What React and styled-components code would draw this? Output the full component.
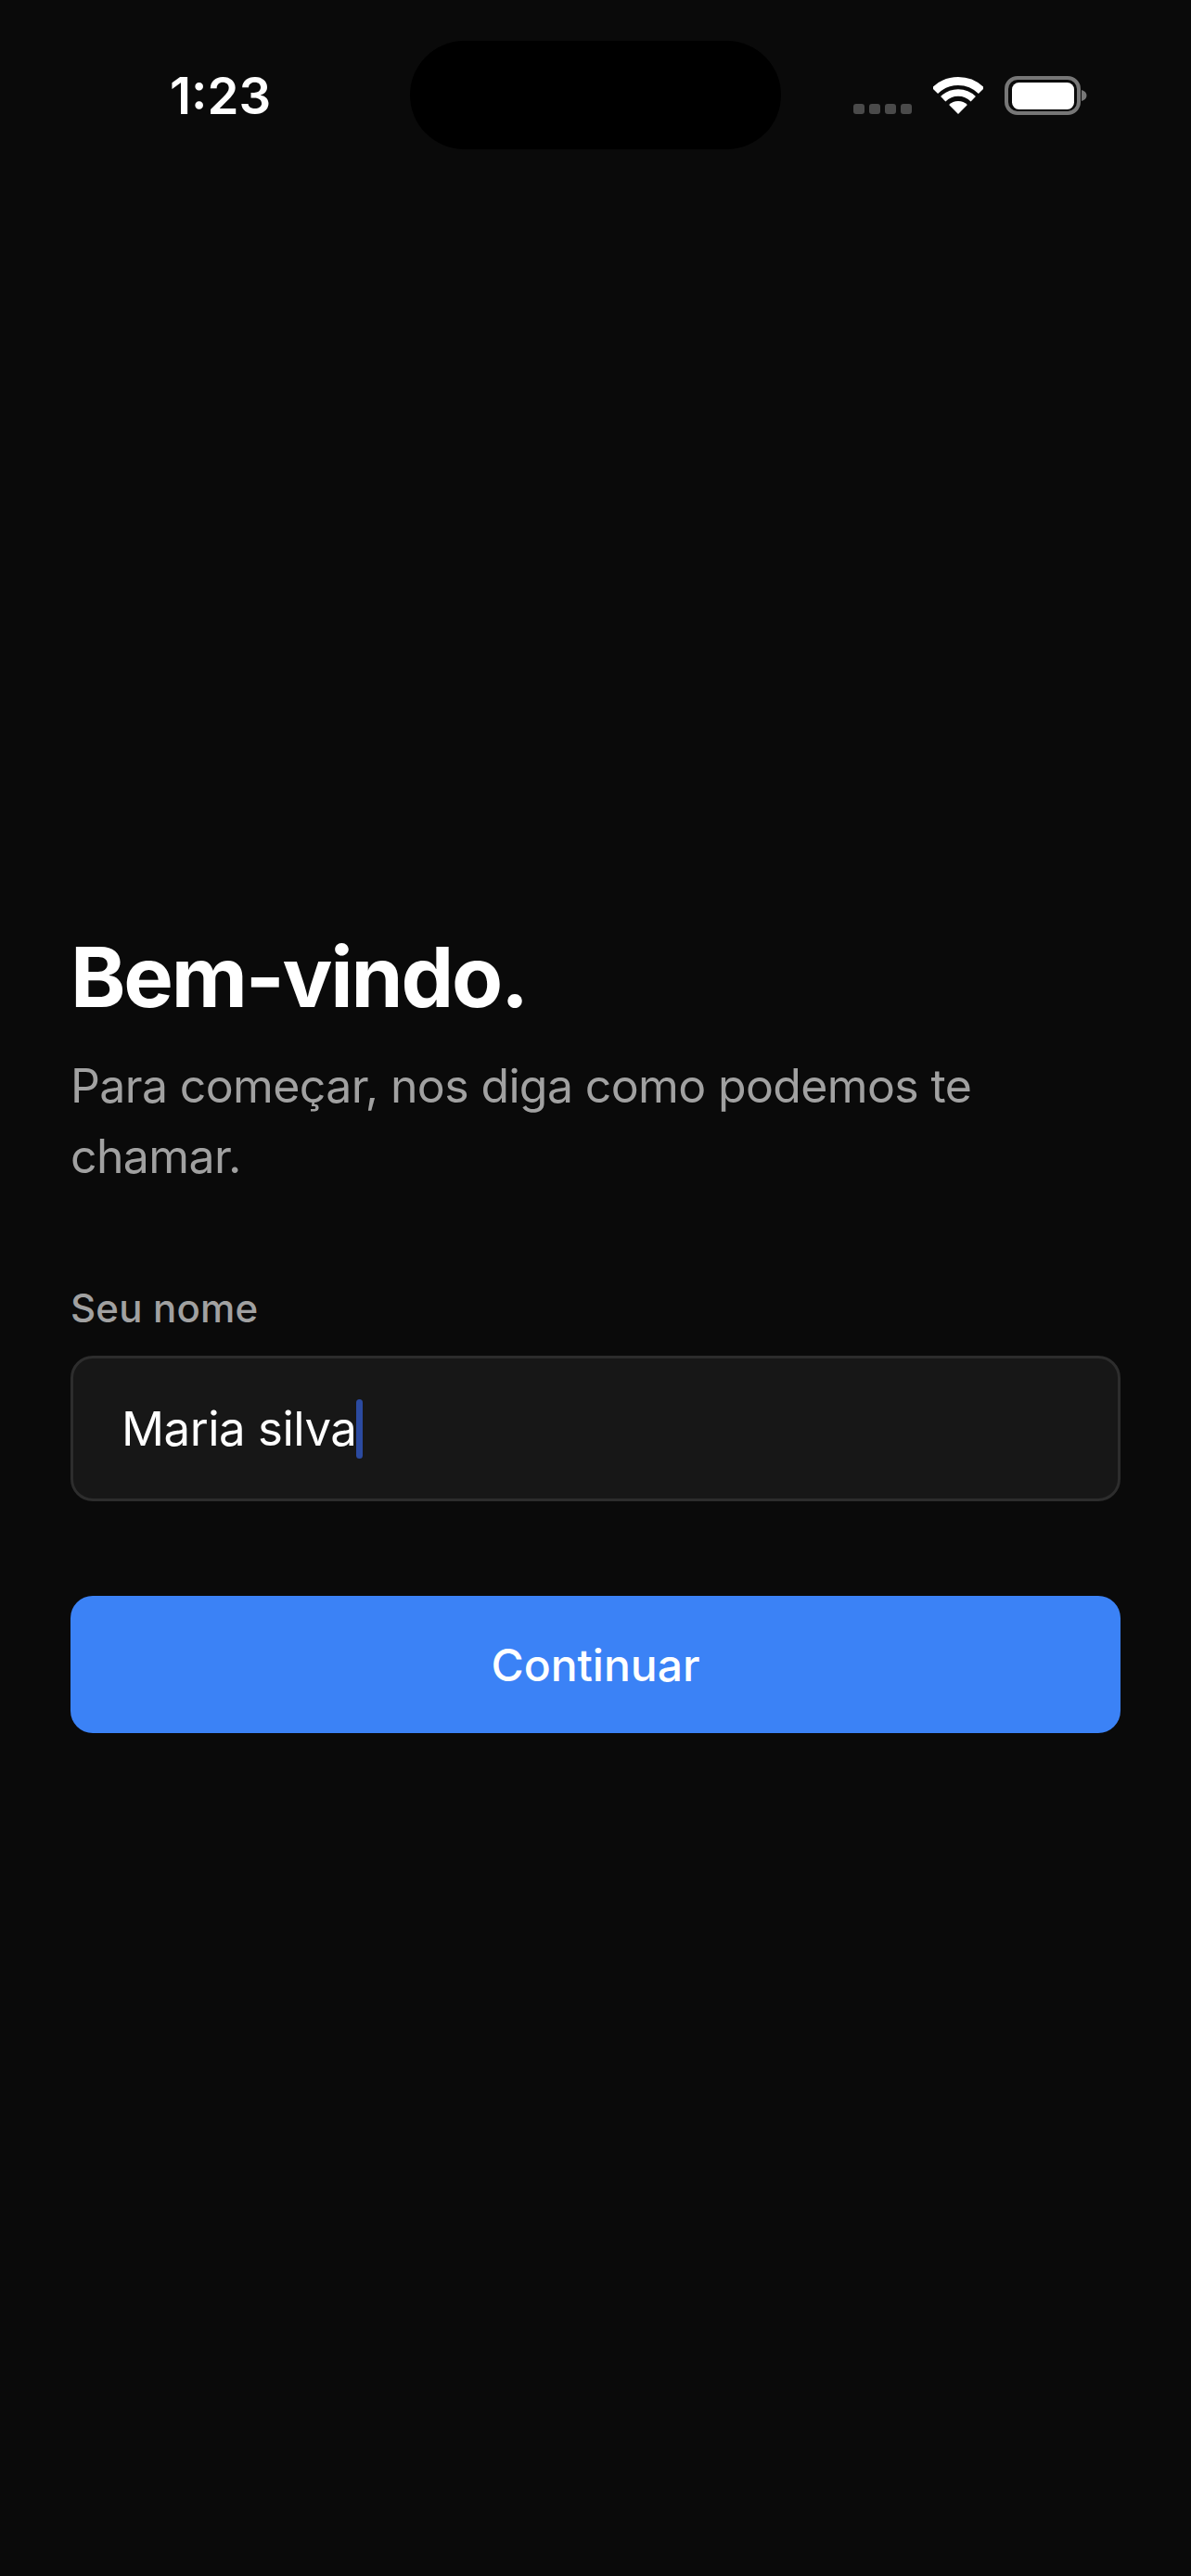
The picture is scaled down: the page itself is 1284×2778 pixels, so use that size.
import React from 'react';
import styled, { createGlobalStyle } from 'styled-components';

const GlobalStyle = createGlobalStyle`
  html, body {
    margin: 0;
    padding: 0;
    background: #0a0a0a;
  }
  * {
    box-sizing: border-box;
  }
`;

const Screen = styled.div`
  width: 1284px;
  height: 2778px;
  overflow: hidden;
  background: #0a0a0a;
  font-family: Inter, "Liberation Sans", sans-serif;
  color: #fff;
`;

const StatusBar = styled.div`
  display: grid;
  grid-template-columns: 1fr 400px 1fr;
  align-items: center;
  height: 117px;
  padding-top: 44px;
`;

const Time = styled.div`
  padding: 2px 0 0 183px;
  font-size: 54.5px;
  font-weight: 600;
  line-height: 1;
`;

const Island = styled.div`
  height: 117px;
  border-radius: 59px;
  background: #000;
`;

const StatusIcons = styled.div`
  display: flex;
  align-items: flex-start;
  height: 42px;
  padding-left: 78px;
`;

const Signal = styled.div`
  display: flex;
  gap: 5px;
  margin-top: 30px;
`;

const SignalDot = styled.span`
  width: 12px;
  height: 11px;
  border-radius: 3px;
  background: #4a4a4a;
`;

const WifiIcon = styled.svg`
  display: block;
  margin-left: 23px;
  margin-top: 1px;
`;

const BatteryIcon = styled.svg`
  display: block;
  margin-left: 23px;
`;

const Main = styled.main`
  padding: 887px 76px 0;
`;

const Title = styled.h1`
  margin: 0;
  font-size: 90px;
  line-height: 100px;
  font-weight: 700;
  letter-spacing: -2.2px;
  color: #fff;
`;

const Subtitle = styled.p`
  margin: 29px 0 0;
  font-size: 50px;
  line-height: 76px;
  font-weight: 400;
  letter-spacing: -0.63px;
  color: #a1a1a1;
`;

const Label = styled.label`
  display: block;
  margin-top: 99px;
  font-size: 42px;
  line-height: 54px;
  font-weight: 500;
  letter-spacing: 0.2px;
  color: #a1a1a1;
`;

const NameField = styled.div`
  display: flex;
  align-items: center;
  height: 157px;
  margin-top: 24px;
  padding: 0 52px;
  border: 3px solid #2d2d2d;
  border-radius: 24px;
  background: #171717;
  font-size: 51px;
  letter-spacing: -0.5px;
  color: #fff;
`;

const Caret = styled.span`
  flex: none;
  width: 7px;
  height: 64px;
  border-radius: 4px;
  background: #2b4aa0;
`;

const Submit = styled.button`
  display: block;
  width: 100%;
  height: 148px;
  margin-top: 102px;
  border: 0;
  border-radius: 24px;
  background: #3b82f6;
  color: #fff;
  font-family: inherit;
  font-size: 48px;
  font-weight: 500;
`;

const App = () => (
  <>
    <GlobalStyle />
    <Screen>
      <StatusBar>
        <Time>1:23</Time>
        <Island />
        <StatusIcons>
          <Signal>
            <SignalDot />
            <SignalDot />
            <SignalDot />
            <SignalDot />
          </Signal>
          <WifiIcon width="54" height="40" viewBox="0 0 54 40" fill="none">
            <path d="M1.9 14.9A35.5 35.5 0 0 1 52.1 14.9" stroke="#fff" strokeWidth="9" />
            <path d="M10.74 23.74A23 23 0 0 1 43.26 23.74" stroke="#fff" strokeWidth="7.5" />
            <path d="M27 40L17.1 30.1A14 14 0 0 1 36.9 30.1Z" fill="#fff" />
          </WifiIcon>
          <BatteryIcon width="89" height="42" viewBox="0 0 89 42" fill="none">
            <rect x="2" y="2" width="78" height="38" rx="12" stroke="#777" strokeWidth="4" />
            <rect x="8" y="7" width="67" height="29" rx="7.5" fill="#fff" />
            <path d="M83 15C86.5 16 88.5 18.3 88.5 21C88.5 23.7 86.5 26 83 27Z" fill="#777" />
          </BatteryIcon>
        </StatusIcons>
      </StatusBar>
      <Main>
        <Title>Bem-vindo.</Title>
        <Subtitle>
          Para começar, nos diga como podemos te
          <br />
          chamar.
        </Subtitle>
        <Label>Seu nome</Label>
        <NameField>
          Maria silva
          <Caret />
        </NameField>
        <Submit type="button">Continuar</Submit>
      </Main>
    </Screen>
  </>
);

export default App;
